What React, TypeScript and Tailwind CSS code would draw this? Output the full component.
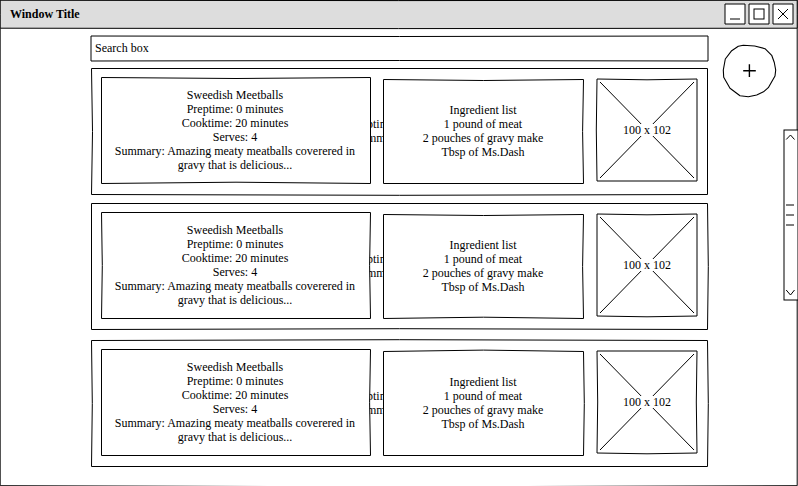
import type { ReactNode } from "react";

type Bow = [number, number, number, number];

// Hand-drawn rectangle outline: each side bends by `bow` pixels (top, right, bottom, left; positive is down or right).
function Outline({ w, h, bow = [0, 0, 0, 0], at = 0.5, fill = "#fff" }: { w: number; h: number; bow?: Bow; at?: number; fill?: string }) {
  const [t, r, b, l] = bow;
  const x2 = at + w;
  const y2 = at + h;
  const cx = at + w / 2;
  const cy = at + h / 2;
  const d = `M${at} ${at}Q${cx} ${at + 2 * t} ${x2} ${at}Q${x2 + 2 * r} ${cy} ${x2} ${y2}Q${cx} ${y2 + 2 * b} ${at} ${y2}Q${at + 2 * l} ${cy} ${at} ${at}Z`;
  return (
    <svg className="pointer-events-none absolute left-0 top-0 overflow-visible" width={w + 1} height={h + 1}>
      <path d={d} fill={fill} stroke="#000" strokeWidth="1" strokeLinejoin="round" />
    </svg>
  );
}

function WindowButton({ children }: { children: ReactNode }) {
  return (
    <svg width="22" height="22" viewBox="0 0 22 22" fill="none" stroke="#000">
      <rect x="1" y="1" width="20" height="20" fill="#fff" strokeLinejoin="round" />
      {children}
    </svg>
  );
}

interface Recipe {
  card: Bow;
  summary: Bow;
  ingredients: Bow;
  image: Bow;
  spacing: string;
}

const recipes: Recipe[] = [
  { card: [0, 0, 0.8, 1], summary: [1, 0, -1.3, 0], ingredients: [1, -0.9, 0, 0], image: [0.8, 0, 0, -0.7], spacing: "mt-[6px]" },
  { card: [0, 0.8, -0.8, 0], summary: [0, -0.9, 0, 0.8], ingredients: [1, -0.9, -1.3, 0], image: [0.8, 0, 0.8, 0], spacing: "mt-2" },
  { card: [-0.8, 0.8, 0, 0.8], summary: [0, -0.9, 0, 0], ingredients: [-1.4, 0.8, 0, 0], image: [0, -0.7, 0.8, 0.7], spacing: "mt-[10px]" },
];

function RecipeCard({ recipe }: { recipe: Recipe }) {
  return (
    <article className={`relative flex h-[127px] w-[617px] shrink-0 items-start pl-[10px] pt-[9px] ${recipe.spacing}`}>
      <Outline w={616} h={126} bow={recipe.card} />
      <section className="relative z-10 flex h-[107px] w-[270px] shrink-0 flex-col items-center justify-center pb-[1px] pr-[2px] text-center">
        <Outline w={269} h={106} bow={recipe.summary} />
        <div className="relative whitespace-nowrap">
          <p>Sweedish Meetballs</p>
          <p>Preptime: 0 minutes</p>
          <p>Cooktime: 20 minutes</p>
          <p>Serves: 4</p>
          <p>Summary: Amazing meaty meatballs coverered in</p>
          <p>gravy that is delicious...</p>
        </div>
      </section>
      <div className="relative -ml-1 -mr-3 mt-[40px] h-7 w-7 shrink-0 whitespace-nowrap">
        <p>ptim</p>
        <p>mm</p>
      </div>
      <section className="relative z-10 mt-[2px] flex h-[105px] w-[201px] shrink-0 flex-col items-center justify-center pb-[2px] pr-[1px] text-center">
        <Outline w={200} h={104} bow={recipe.ingredients} />
        <div className="relative">
          <p>Ingredient list</p>
          <p>1 pound of meat</p>
          <p>2 pouches of gravy make</p>
          <p>Tbsp of Ms.Dash</p>
        </div>
      </section>
      <figure className="relative ml-3 mt-[1px] flex h-[104px] w-[102px] shrink-0 items-center justify-center">
        <Outline w={100} h={102} bow={recipe.image} at={1} />
        <svg className="absolute left-0 top-0" width="102" height="104" stroke="#000" strokeWidth="1">
          <path d="M4 4L98 100M98 4L4 100" />
        </svg>
        <figcaption className="relative h-3 bg-white leading-3">100 x 102</figcaption>
      </figure>
    </article>
  );
}

export default function App() {
  return (
    <div className="relative flex h-[486px] w-[798px] flex-col overflow-hidden bg-white font-['Liberation_Serif',serif] text-[12px] leading-[14px] text-black">
      <Outline w={797} h={485.5} bow={[0.2, 0, 1.2, -0.1]} at={0.2} />
      <header className="relative flex h-7 shrink-0 items-center justify-between pl-[10px] pr-1">
        <Outline w={797} h={28} bow={[0.4, 0, 0.4, 0]} at={0.2} fill="#ddd" />
        <h1 className="relative font-bold">Window Title</h1>
        <div className="relative flex gap-[2px]">
          <WindowButton><path d="M6 16H16" /></WindowButton>
          <WindowButton><rect x="6" y="6" width="10" height="10" /></WindowButton>
          <WindowButton><path d="M6 6L16 16M16 6L6 16" /></WindowButton>
        </div>
      </header>
      <div className="relative flex grow">
        <main className="ml-[91px] flex w-[617px] shrink-0 flex-col pt-2">
          <div className="relative flex h-[26px] shrink-0 items-center pb-[2px] pl-1">
            <Outline w={617} h={25} bow={[0.5, 0, -0.5, 0]} at={0} />
            <span className="relative">Search box</span>
          </div>
          {recipes.map((recipe) => (
            <RecipeCard key={recipe.spacing} recipe={recipe} />
          ))}
        </main>
        <aside className="flex grow flex-col pt-4">
          <svg className="ml-[14px] shrink-0" width="56" height="54" viewBox="722 44 56 54" fill="none" stroke="#000">
            <path d="M743.3 45.3L754.7 46L765 48.7L771.7 55.3L774.3 62.5L775.7 70L775 76L768.3 87.7L763.5 91.8L756.7 95L748.3 96.7L740 95.7L730 88.3L723.7 77.2L723.3 70L725.3 59L731.7 50.7L738.3 46.3Z" strokeWidth="1.1" strokeLinejoin="round" />
            <path d="M743.2 70.7H755.8M749.4 64.2V77" strokeWidth="1.4" />
          </svg>
          <svg className="mt-[31px] shrink-0 self-end" width="15" height="172" viewBox="783 129 15 172" fill="none" stroke="#000">
            <rect x="784" y="130" width="14" height="170" fill="#fff" />
            <path d="M786.2 139.5L790.5 135L794.5 139.5M786.2 290L790.5 295L794.5 290" />
            <path d="M786 205H794M786 215H794M786 225H794" />
          </svg>
        </aside>
      </div>
    </div>
  );
}
